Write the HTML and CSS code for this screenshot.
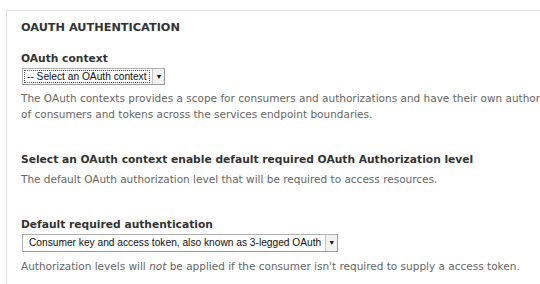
FILE: index.html
```html
<!DOCTYPE html>
<html lang="en">
<head>
    <meta charset="UTF-8">
    <title>OAuth authentication</title>
    <link rel="stylesheet" href="styles.css">
</head>
<body>
    <div class="fieldset">
        <h2 class="legend">OAUTH AUTHENTICATION</h2>

        <div class="form-item">
            <label>OAuth context</label>
            <span class="select focused">
                <span class="select-text">-- Select an OAuth context</span>
                <span class="select-arrow">&#9660;</span>
            </span>
            <p class="description">The OAuth contexts provides a scope for consumers and authorizations and have their own authorization levels<br>of consumers and tokens across the services endpoint boundaries.</p>
        </div>

        <div class="form-item">
            <label>Select an OAuth context enable default required OAuth Authorization level</label>
            <p class="description">The default OAuth authorization level that will be required to access resources.</p>
        </div>

        <div class="form-item">
            <label>Default required authentication</label>
            <span class="select wide">
                <span class="select-text">Consumer key and access token, also known as 3-legged OAuth</span>
                <span class="select-arrow">&#9660;</span>
            </span>
            <p class="description">Authorization levels will <em>not</em> be applied if the consumer isn't required to supply a access token.</p>
        </div>
    </div>
</body>
</html>
```

FILE: styles.css
```css
/* Basic Styles */
body {
    font-family: "DejaVu Sans", Verdana, sans-serif;
    background-color: #ffffff;
    color: #333;
    margin: 0;
    padding: 0;
}

.fieldset {
    margin: 10px 0 0 6px;
    border-top: 1px solid #dedede;
    border-left: 1px solid #dedede;
    padding: 10px 0 20px 14px;
    white-space: nowrap;
    overflow: hidden;
    height: 300px;
}

.legend {
    font-size: 11.3px;
    font-weight: bold;
    margin: 0 0 18px;
    color: #333;
}

.form-item {
    margin-bottom: 31px;
}

label {
    display: block;
    font-size: 10.7px;
    font-weight: bold;
    margin-bottom: 0;
}

.description {
    font-size: 10.5px;
    color: #666;
    line-height: 16px;
    margin: 5px 0 0;
}

/* Mac style select */
.select {
    display: inline-flex;
    align-items: stretch;
    font-family: "Liberation Sans", Arial, sans-serif;
    font-size: 10.2px;
    color: #111;
    border: 1px solid #b0b0b0;
    border-right-color: #999;
    border-bottom-color: #999;
    background: #fff;
    height: 17px;
    box-sizing: border-box;
    margin-left: 1px;
}

.select-text {
    display: flex;
    align-items: center;
    padding: 0 4px;
}

.focused .select-text {
    border: 1px dotted #555;
    margin: 1px 2px 1px 1px;
    padding: 0 3px 0 2px;
}

.select-arrow {
    display: flex;
    align-items: center;
    justify-content: center;
    width: 11px;
    font-size: 7px;
    border-left: 1px solid #c8c8c8;
    background: #f2f2f2;
}

.wide {
    height: 18px;
    margin-top: 1px;
}

.wide .select-text {
    padding: 0 4px 0 6px;
}

.wide + .description {
    margin-top: 6px;
}
```
